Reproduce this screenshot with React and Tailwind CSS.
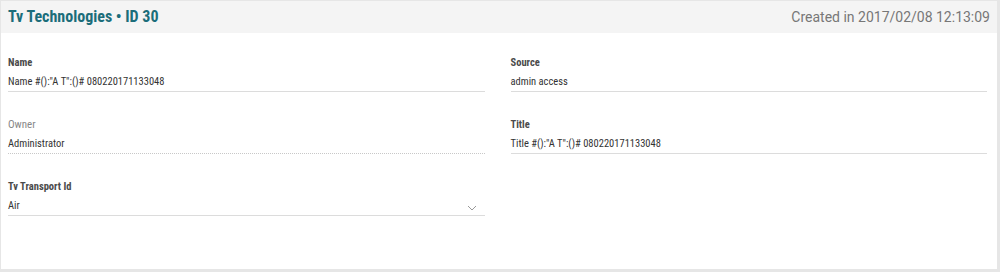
import React from "react";

const narrow = { fontFamily: "'Liberation Sans Narrow', 'Roboto Condensed', Roboto, sans-serif" };

const Field = ({ label, value, muted, dotted, select }) => (
  <div className="flex flex-col" style={narrow}>
    <label
      className={
        muted
          ? "text-[11px] leading-[14px] text-[#888]"
          : "text-[10.5px] leading-[14px] font-bold text-[#4a4a4a]"
      }
    >
      {label}
    </label>
    <div
      className={
        "mt-[4px] flex items-center justify-between h-[18px] pb-[1px] text-[10.5px] text-[#333] " +
        (dotted
          ? "border-b border-dotted border-[#c8c8c8]"
          : "border-b border-[#dcdcdc]")
      }
    >
      <span>{value}</span>
      {select ? (
        <svg width="10" height="6" viewBox="0 0 10 6" className="mr-[8px] mt-[3px]">
          <path d="M1 1l4 4 4-4" fill="none" stroke="#999" strokeWidth="1" />
        </svg>
      ) : null}
    </div>
  </div>
);

const App = () => {
  return (
    <div
      className="w-[1000px] h-[272px] bg-[#e6e6e6] pl-px pt-px pr-[3px] pb-[3px]"
      style={{ fontFamily: "Roboto, 'Liberation Sans', sans-serif" }}
    >
      <div className="h-full bg-white flex flex-col">
        {/* Header */}
        <div className="h-[32px] bg-[#f4f4f4] flex items-center justify-between pl-[7px] pr-[7px]">
          <h1 className="text-[16px] font-bold text-[#1b6d7a]" style={narrow}>
            Tv Technologies • ID 30
          </h1>
          <span className="text-[14px] text-[#777]">
            Created in 2017/02/08 12:13:09
          </span>
        </div>

        {/* Body */}
        <div className="grid grid-cols-2 gap-x-[26px] gap-y-[26px] pl-[7px] pr-[10px] pt-[23px]">
          <Field label="Name" value={'Name #():"A T":()# 080220171133048'} />
          <Field label="Source" value="admin access" />
          <Field label="Owner" value="Administrator" muted dotted />
          <Field label="Title" value={'Title #():"A T":()# 080220171133048'} />
          <Field label="Tv Transport Id" value="Air" select />
        </div>
      </div>
    </div>
  );
};

export default App;
